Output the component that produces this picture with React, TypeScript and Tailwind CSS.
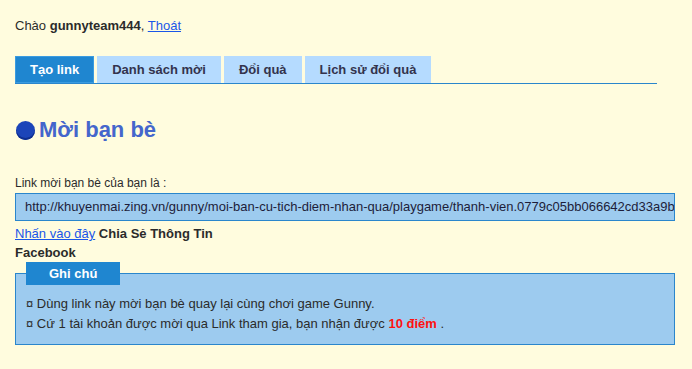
import React from 'react'

const tabs = ['Tạo link', 'Danh sách mời', 'Đổi quà', 'Lịch sử đổi quà']

const App = () => {
  return (
    <div className="min-h-screen w-full bg-[#fffcde] px-[15px] pt-[18px] text-[13px] text-[#2b2b2b] font-['Liberation_Sans',Arial,sans-serif]">
      <div className="leading-4">
        Chào <b>gunnyteam444</b>, <a href="#" className="text-[#1a56e8] underline">Thoát</a>
      </div>

      {/* tabs */}
      <div className="mt-[22px] flex w-[642px] gap-[3px] border-b border-[#2a86cc]">
        {tabs.map((t, i) => (
          <div
            key={t}
            className={`h-[27px] whitespace-nowrap font-bold ${
              i === 0
                ? 'px-[14px] bg-[#1f86d0] text-white border border-[#3a9be0] leading-[25px]'
                : 'px-[15px] leading-[27px] bg-[#b5dbff] text-[#33334d]'
            }`}
          >
            {t}
          </div>
        ))}
      </div>

      <h2 className="mt-[33px] flex items-center gap-[4px] text-[22px] leading-[26px] font-bold text-[#4466cc]">
        <span className="ml-px inline-block h-[19px] w-[19px] rounded-full bg-[#1c45b9] shadow-[inset_0_-2px_0_#0f2f8f]"></span>
        Mời bạn bè
      </h2>

      <div className="mt-[32px] text-[12px] leading-4">Link mời bạn bè của bạn là :</div>
      <div className="mt-[2px] h-[28px] w-[660px] overflow-hidden whitespace-nowrap border border-[#2a86cc] bg-[#9dcbef] pl-[9px] leading-[26px] text-[#1d1d3a]">
        http://khuyenmai.zing.vn/gunny/moi-ban-cu-tich-diem-nhan-qua/playgame/thanh-vien.0779c05bb066642cd33a9b
      </div>

      <div className="mt-[3px] leading-[19px]">
        <a href="#" className="text-[#1a56e8] underline">Nhấn vào đây</a> <b>Chia Sẻ Thông Tin</b>
      </div>
      <div className="leading-[19px] font-bold">Facebook</div>

      <fieldset className="w-[660px] border border-[#2a86cc] bg-[#9dcbef] px-[10px] pb-[10px] pt-[9px]">
        <legend className="bg-[#1f86d0] px-[23px] font-bold leading-[23px] text-white">Ghi chú</legend>
        <p className="leading-5">¤ Dùng link này mời bạn bè quay lại cùng chơi game Gunny.</p>
        <p className="leading-5">
          ¤ Cứ 1 tài khoản được mời qua Link tham gia, bạn nhận được{' '}
          <b className="text-[#ff1111]">10 điểm</b> .
        </p>
      </fieldset>
    </div>
  )
}

export default App
